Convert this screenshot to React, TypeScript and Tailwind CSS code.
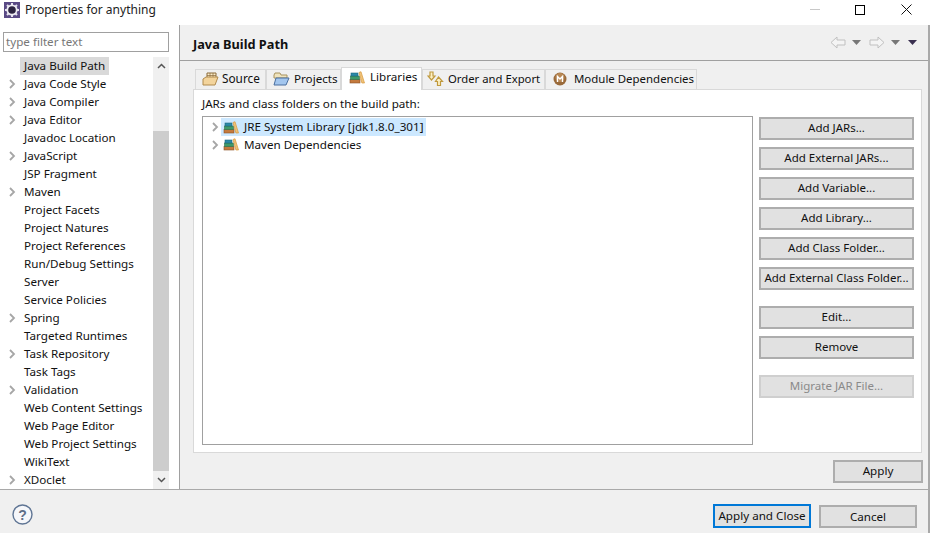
import React from 'react';

const treeItems = [
  { label: 'Java Build Path', arrow: false, selected: true },
  { label: 'Java Code Style', arrow: true },
  { label: 'Java Compiler', arrow: true },
  { label: 'Java Editor', arrow: true },
  { label: 'Javadoc Location', arrow: false },
  { label: 'JavaScript', arrow: true },
  { label: 'JSP Fragment', arrow: false },
  { label: 'Maven', arrow: true },
  { label: 'Project Facets', arrow: false },
  { label: 'Project Natures', arrow: false },
  { label: 'Project References', arrow: false },
  { label: 'Run/Debug Settings', arrow: false },
  { label: 'Server', arrow: false },
  { label: 'Service Policies', arrow: false },
  { label: 'Spring', arrow: true },
  { label: 'Targeted Runtimes', arrow: false },
  { label: 'Task Repository', arrow: true },
  { label: 'Task Tags', arrow: false },
  { label: 'Validation', arrow: true },
  { label: 'Web Content Settings', arrow: false },
  { label: 'Web Page Editor', arrow: false },
  { label: 'Web Project Settings', arrow: false },
  { label: 'WikiText', arrow: false },
  { label: 'XDoclet', arrow: true },
];

const Chevron = () => (
  <svg width="7" height="10" viewBox="0 0 7 10" fill="none" stroke="#a6a6a6" strokeWidth="1.8">
    <path d="M1 1l4 4-4 4" />
  </svg>
);

const LibIcon = () => (
  <svg width="16" height="13" viewBox="0 0 16 13">
    <rect x="1" y="8.5" width="10" height="3.5" fill="#c47a3e" stroke="#8a5226" strokeWidth="0.6" />
    <rect x="1.5" y="5" width="9" height="3.5" fill="#3f9a6a" stroke="#2a6e4a" strokeWidth="0.6" />
    <rect x="2" y="2" width="7" height="3" fill="#2a8aa8" stroke="#1f6680" strokeWidth="0.6" />
    <path d="M10 1.5l2-.8L15.5 12h-2.6z" fill="#efc27a" stroke="#d89a3c" strokeWidth="0.7" />
  </svg>
);

const SourceIcon = () => (
  <svg width="17" height="14" viewBox="0 0 17 14">
    <path d="M5 1h9v5H5z" fill="#fbeccb" stroke="#8a6a3a" />
    <path d="M8 1v5M11 1v5M5 3.5h9" stroke="#8a6a3a" strokeWidth="0.7" />
    <path d="M1 7l3-2h12l-3 8H1z" fill="#f3d49c" stroke="#b08a4d" />
  </svg>
);

const ProjectsIcon = () => (
  <svg width="17" height="14" viewBox="0 0 17 14">
    <path d="M1 3l1-2h5l1 2h6v3H1z" fill="#efe3bd" stroke="#a8935f" />
    <path d="M1 13l2-7h13l-3 7z" fill="#a3c6ee" stroke="#4a6f9f" />
  </svg>
);

const OrderIcon = () => (
  <svg width="17" height="16" viewBox="0 0 17 16" fill="#fdf0c4" stroke="#c09a3e" strokeWidth="1.2">
    <path d="M3 1h3v4h2L4.5 9 1 5h2z" />
    <path d="M11.5 6l4 4.5h-2v4h-3v-4h-2z" />
  </svg>
);

const ModuleIcon = () => (
  <svg width="14" height="14" viewBox="0 0 14 14">
    <circle cx="7" cy="7" r="6.5" fill="#9a6a3a" />
    <circle cx="7" cy="5.5" r="4.5" fill="#b98955" />
    <path d="M4.5 10V4.5L7 7l2.5-2.5V10" fill="none" stroke="#fff" strokeWidth="1.4" />
  </svg>
);

const tabs = [
  { label: 'Source', icon: <SourceIcon />, width: 'w-[71px]', pad: 'pl-[6px] gap-[3px] text-[11.8px]' },
  { label: 'Projects', icon: <ProjectsIcon />, width: 'w-[75px]', pad: 'pl-[6px] gap-[4px] text-[11.65px]' },
  { label: 'Libraries', icon: <LibIcon />, width: 'w-[81px]', pad: 'pl-[7px] gap-[5px] text-[11.65px]', active: true },
  { label: 'Order and Export', icon: <OrderIcon />, width: 'w-[123px]', pad: 'pl-[4px] gap-[4px] text-[11.3px]' },
  { label: 'Module Dependencies', icon: <ModuleIcon />, width: 'w-[152px]', pad: 'pl-[7px] gap-[7px] text-[11.45px]' },
];

const Btn = ({ label, className = '', disabled = false }: { label: string; className?: string; disabled?: boolean }) => (
  <div
    className={`flex h-[23px] w-[155px] items-center justify-center whitespace-nowrap border-2 border-[#adadad] bg-[#e1e1e1] pb-px text-[11.5px] ${
      disabled ? 'border-[#cfcfcf] bg-[#dcdcdc] text-[#8a8a8a]' : 'text-[#111]'
    } ${className}`}
  >
    {label}
  </div>
);

const ArrowOutline = ({ flip = false }: { flip?: boolean }) => (
  <svg width="16" height="13" viewBox="0 0 16 13" fill="#f4f4f4" stroke="#c0c0c0" strokeWidth="1" className={flip ? 'scale-x-[-1]' : ''}>
    <path d="M1 6.5L7 1v3h8v5H7v3z" />
  </svg>
);

const Caret = ({ dark = false }: { dark?: boolean }) => (
  <svg width="9" height="5" viewBox="0 0 9 5">
    <path d="M0 0h9L4.5 5z" fill={dark ? '#3a3050' : '#777'} />
  </svg>
);

export default function App() {
  return (
    <div className="flex h-[533px] w-[935px] flex-col overflow-hidden bg-white text-[11.65px] text-[#111]" style={{ fontFamily: '"Noto Sans", "Open Sans", sans-serif' }}>
      {/* title bar */}
      <div className="flex h-[25px] shrink-0 items-start">
        <svg width="18" height="18" viewBox="0 0 18 18" className="ml-[3px] mt-px">
          <rect x="1" y="1" width="16" height="16" fill="#5a4a85" />
          <g stroke="#e6e3ee" strokeWidth="2">
            <path d="M9 2v14M2 9h14M4 4l10 10M14 4L4 14" />
          </g>
          <circle cx="9" cy="9" r="5.6" fill="#eeecf3" />
          <circle cx="9" cy="9" r="3.8" fill="#2c2440" />
        </svg>
        <span className="ml-[4px] mt-[1px] text-[12px] leading-[18px] text-[#222]">Properties for anything</span>
        <div className="ml-auto mt-[4px] flex items-center">
          <div className="mr-[35px] h-px w-[10px] bg-[#c8c8c8]" />
          <div className="mr-[36px] h-[10px] w-[10px] border border-black" />
          <svg width="11" height="11" viewBox="0 0 11 11" stroke="#111" className="mr-[23px]">
            <path d="M0.5 0.5l10 10M10.5 0.5l-10 10" />
          </svg>
        </div>
      </div>

      <div className="mr-[5px] flex min-h-0 flex-1 border-r-2 border-[#a9a9a9]">
        {/* left */}
        <div className="flex w-[180px] shrink-0 flex-col border-r border-[#a0a0a0]">
          <div className="ml-[3px] mt-[7px] flex h-[20px] w-[166px] items-center border border-[#a0a0a0] px-[2px] pb-px text-[#777]">type filter text</div>
          <div className="mt-[5px] flex min-h-0 flex-1">
            <div className="w-[153px]">
              {treeItems.map((it) => (
                <div key={it.label} className="flex h-[18px] items-center">
                  <span className="flex w-[20px] justify-end pr-[4px]">{it.arrow && <Chevron />}</span>
                  <span className={`px-[4px] pb-px leading-[17px] ${it.selected ? 'bg-[#d9d9d9]' : ''}`}>{it.label}</span>
                </div>
              ))}
            </div>
            <div className="flex w-[16px] flex-col bg-[#f0f0f0]">
              <div className="flex h-[18px] items-center justify-center">
                <svg width="9" height="6" viewBox="0 0 9 6" fill="none" stroke="#555" strokeWidth="1.5"><path d="M1 5l3.5-3.5L8 5" /></svg>
              </div>
              <div className="mt-[56px] h-[341px] bg-[#cdcdcd]" />
              <div className="flex h-[18px] items-center justify-center">
                <svg width="9" height="6" viewBox="0 0 9 6" fill="none" stroke="#555" strokeWidth="1.5"><path d="M1 1l3.5 3.5L8 1" /></svg>
              </div>
            </div>
          </div>
        </div>

        {/* right */}
        <div className="flex min-w-0 flex-1 flex-col bg-[#f0f0f0]">
          <div className="flex h-[36px] items-center border-b border-[#a0a0a0] pl-[13px] pr-[11px] pt-[4px]">
            <span className="text-[12.75px] font-bold">Java Build Path</span>
            <div className="-mt-[4px] ml-auto flex items-center">
              <ArrowOutline />
              <span className="ml-[6px] flex"><Caret /></span>
              <span className="ml-[8px] flex"><ArrowOutline flip /></span>
              <span className="ml-[6px] flex"><Caret /></span>
              <span className="ml-[8px] flex"><Caret dark /></span>
            </div>
          </div>

          <div className="ml-[13px] mt-[6px] w-[729px]">
            <div className="flex h-[22px] items-end pl-[2px]">
              {tabs.map((t) => (
                <div
                  key={t.label}
                  className={`flex items-center whitespace-nowrap border border-b-0 border-[#d9d9d9] ${t.pad} ${t.width} ${
                    t.active ? 'relative z-10 -mb-px h-[23px] bg-white pb-[4px]' : 'h-[20px] bg-[#f0f0f0] pb-px'
                  }`}
                >
                  {t.icon}
                  <span>{t.label}</span>
                </div>
              ))}
            </div>
            <div className="h-[364px] border border-[#d9d9d9] bg-white pl-[8px]">
              <div className="flex h-[26px] items-center pt-[2px]">JARs and class folders on the build path:</div>
              <div className="flex">
                <div className="h-[329px] w-[551px] border border-[#a0a0a0] bg-white pt-px">
                  <div className="flex h-[18px] items-center">
                    <span className="ml-[9px] flex w-[9px]"><Chevron /></span>
                    <span className="flex h-[18px] items-center gap-[5px] bg-[#cce8ff] pl-[2px] pr-[2px]">
                      <LibIcon />
                      <span>JRE System Library [jdk1.8.0_301]</span>
                    </span>
                  </div>
                  <div className="flex h-[18px] items-center">
                    <span className="ml-[9px] flex w-[9px]"><Chevron /></span>
                    <span className="flex items-center gap-[5px] pl-[2px]">
                      <LibIcon />
                      <span>Maven Dependencies</span>
                    </span>
                  </div>
                </div>
                <div className="ml-[6px] flex flex-col pt-px">
                  <Btn label="Add JARs..." />
                  <Btn label="Add External JARs..." className="mt-[7px]" />
                  <Btn label="Add Variable..." className="mt-[7px]" />
                  <Btn label="Add Library..." className="mt-[7px]" />
                  <Btn label="Add Class Folder..." className="mt-[7px]" />
                  <Btn label="Add External Class Folder..." className="mt-[7px]" />
                  <Btn label="Edit..." className="mt-[16px]" />
                  <Btn label="Remove" className="mt-[7px]" />
                  <Btn label="Migrate JAR File..." className="mt-[16px]" disabled />
                </div>
              </div>
            </div>
          </div>

          <div className="ml-[653px] mt-[7px] flex h-[23px] w-[90px] items-center justify-center border-2 border-[#adadad] bg-[#e1e1e1] pb-px">Apply</div>
        </div>
      </div>

      {/* footer */}
      <div className="mr-[5px] flex h-[44px] shrink-0 items-end border-r-2 border-t border-[#a9a9a9] bg-[#f0f0f0] pb-[5px] pl-[12px]">
        <svg width="21" height="21" viewBox="0 0 21 21" className="mb-[3px]">
          <circle cx="10.5" cy="10.5" r="9.5" fill="#f6f7fa" stroke="#5f7594" strokeWidth="1.4" />
          <text x="10.5" y="15.5" textAnchor="middle" fontSize="14" fontWeight="700" fill="#5f6f88" fontFamily="Liberation Sans">?</text>
        </svg>
        <div className="ml-auto mr-[11px] flex items-end gap-[8px]">
          <div className="flex h-[24px] w-[98px] items-center justify-center border-2 border-[#0078d7] bg-[#e1e1e1]">Apply and Close</div>
          <div className="flex h-[23px] w-[98px] items-center justify-center border-2 border-[#adadad] bg-[#e1e1e1]">Cancel</div>
        </div>
      </div>
    </div>
  );
}
